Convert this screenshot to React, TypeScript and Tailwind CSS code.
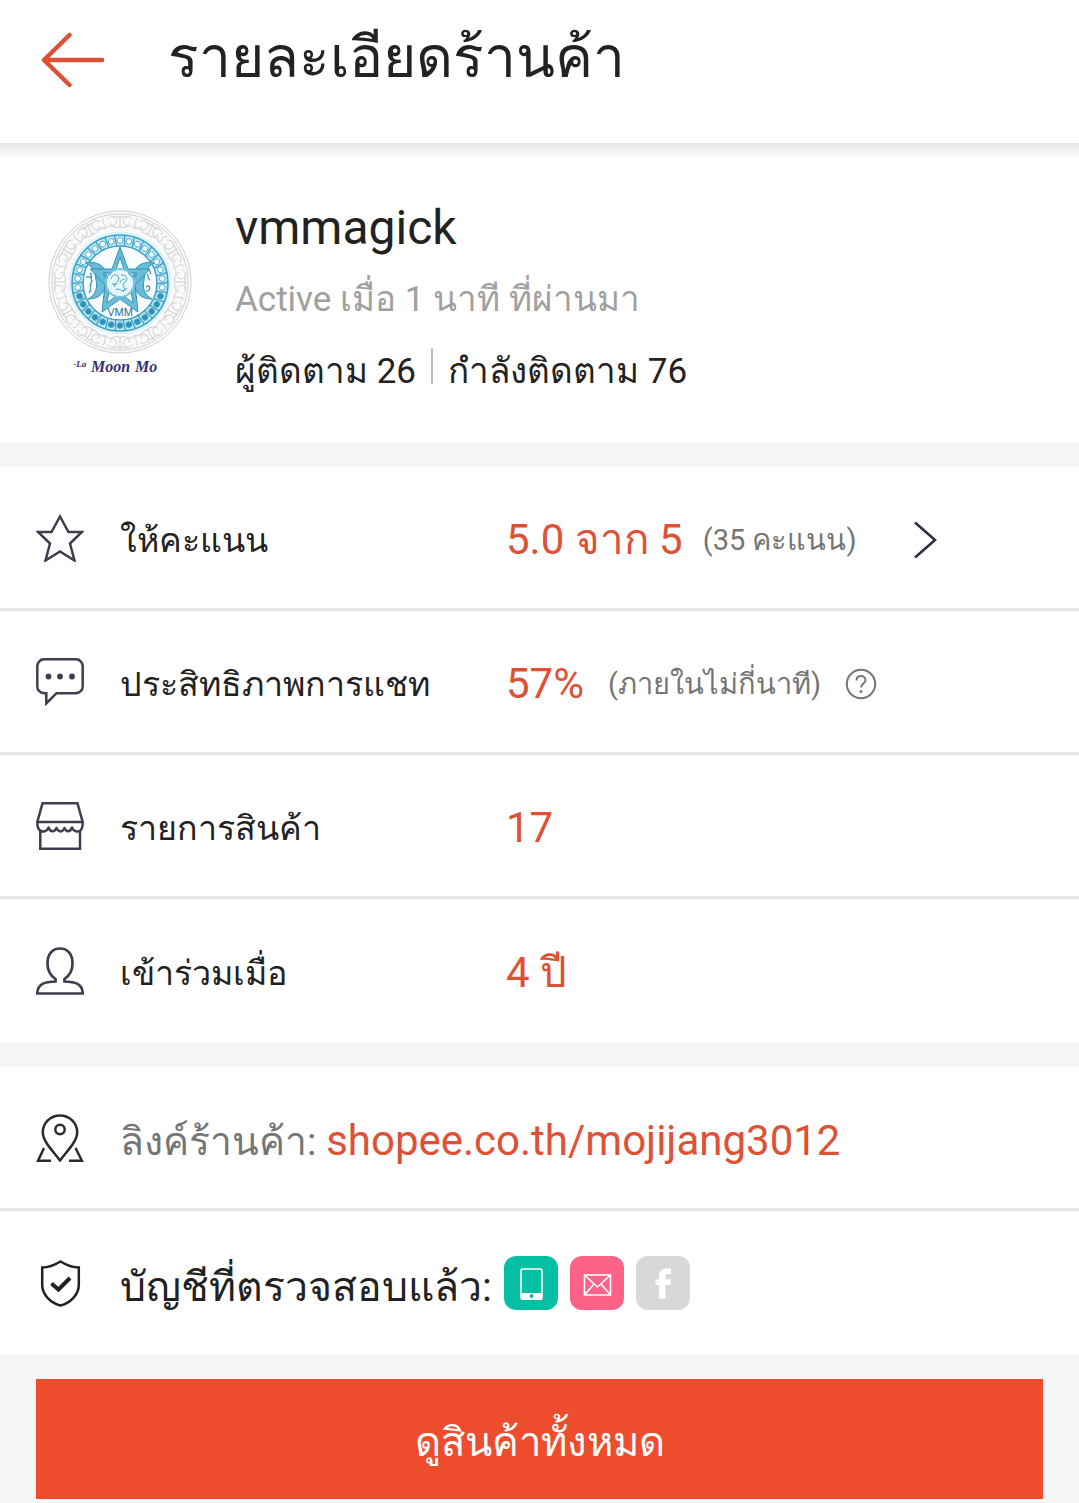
import type { ReactNode } from 'react'

const line = {
  fill: 'none',
  stroke: '#3f3d4f',
  strokeWidth: 2.5,
} as const

function StarIcon() {
  return (
    <svg className="size-12" viewBox="0 0 48 48" aria-hidden="true" {...line}>
      <path d="M24 2.500 32.500 18H46L34 29.500 38.500 46.500 24 37.500 9.500 46.500 14 29.500 2 18H15.500Z" />
    </svg>
  )
}

function ChatIcon() {
  return (
    <svg className="size-12" viewBox="0 0 48 48" aria-hidden="true" {...line}>
      <path d="M8 1.300H40A6.700 6.700 0 0 1 46.700 8V28.500A6.700 6.700 0 0 1 40 35.200H20.500L10.300 45.500V35.200H8A6.700 6.700 0 0 1 1.300 28.500V8A6.700 6.700 0 0 1 8 1.300Z" />
      <g fill="#3f3d4f" stroke="none">
        <circle cx="12.500" cy="18.500" r="2.900" />
        <circle cx="24" cy="18.500" r="2.900" />
        <circle cx="36" cy="18.500" r="2.900" />
      </g>
    </svg>
  )
}

function StoreIcon() {
  return (
    <svg className="size-12" viewBox="0 0 48 48" aria-hidden="true" {...line}>
      <path d="M6.500 1.300H41.500L46.700 20H1.300Z" />
      <path d="M1.300 20C1 26 3.500 29.500 7 29.500 9.500 29.500 11.500 28 12.500 25.500 14.500 30.500 18.500 30.500 20.500 26 22.500 30.500 26.500 30.500 28.500 26 30.500 30.500 34 30.500 36 25.500 37 28 39 29.500 41.500 29.500 45 29.500 47 26 46.700 20" strokeLinejoin="round" />
      <path d="M4.300 28.500V46.700H44V28.500" />
    </svg>
  )
}

function PersonIcon() {
  return (
    <svg className="size-12" viewBox="0 0 48 48" aria-hidden="true" {...line} strokeWidth={2.7}>
      <path d="M19.500 34.500V32C14.500 28.500 11.500 23 11.500 16.500 11.500 7 16.500 1.500 24 1.500S36.500 7 36.500 16.500C36.500 23 33.500 28.500 28.500 32V34.500C39 34.800 46.500 36.500 46.700 46.500H1.300C1.500 36.500 9 34.800 19.500 34.500Z" />
    </svg>
  )
}

function PinIcon() {
  return (
    <svg className="size-12" viewBox="0 0 48 48" aria-hidden="true" {...line} stroke="#2b2b2b">
      <path d="M24 46.500C18 38 6.800 28 6.800 18.200A17.200 16.700 0 0 1 41.200 18.200C41.200 28 30 38 24 46.500Z" />
      <circle cx="24" cy="15.500" r="4.700" />
      <path d="M8 34 2 46.800H15M39.500 34 46 46.800H33" />
    </svg>
  )
}

function ShieldIcon() {
  return (
    <svg className="size-12" viewBox="0 0 48 48" aria-hidden="true" {...line} stroke="#222">
      <path d="M24.500 2.500C18 6.500 12 8.500 6.200 8.500V26C6.200 36 15 44 24.500 46.500 34 44 42.800 36 42.800 26V8.500C37 8.500 31 6.500 24.500 2.500Z" />
      <path d="M15.500 24.500 22.500 30.500 34 19" strokeWidth="4" />
    </svg>
  )
}

const spokes = (count: number) => Array.from({ length: count }, (_, i) => (i * 360) / count)

function Avatar() {
  return (
    <svg className="h-45 w-36 shrink-0" viewBox="0 0 144 180" role="img" aria-label="vmmagick">
      <g fill="none" stroke="#d3cfd3" strokeWidth="1">
        <circle cx="72" cy="79" r="71" fill="#fbfafb" />
        <circle cx="72" cy="79" r="68" />
        {spokes(12).map((a) => (
          <g key={a} transform={`rotate(${a} 72 79)`}>
            <path d="M72 12V25M59 17C64 10 71 15 68 20 66 24 61 22 63 19M85 17C80 10 73 15 76 20 78 24 83 22 81 19M58 25C63 19 68 28 72 23 76 28 81 19 86 25M56 15C52 21 60 22 57 26M65 14H79" />
          </g>
        ))}
      </g>
      <g stroke="#3d9fc2" fill="none">
        <circle cx="72" cy="80" r="51" fill="#d9f4fc" stroke="#d9f4fc" />
        <circle cx="72" cy="80" r="48" fill="#bfe8f5" strokeWidth="1.500" />
        <circle cx="72" cy="80" r="37" fill="#fbfeff" strokeWidth="1.500" />
        {spokes(30).map((a) => (
          <g key={a} transform={`rotate(${a} 72 80)`}>
            <path d="M76.500 32.500V43" strokeWidth="1.300" />
            <circle cx="72" cy="37.500" r="2.900" fill={a > 100 && a < 260 ? '#2d93b8' : '#f6fdff'} strokeWidth="0.800" />
          </g>
        ))}
      </g>
      <g fill="#6bbcd9" stroke="#2d93b8" strokeWidth="1">
        <path d="M38 60C55 57 61 69 58 81 56 92 49 96 40 96 47 92 50 86 48 77 47 69 45 64 38 60Z" />
        <path d="M106 60C89 57 83 69 86 81 88 92 95 96 104 96 97 92 94 86 96 77 97 69 99 64 106 60Z" />
        <path fillRule="evenodd" d="M72 44 80 66 102 66 87 82 90 109 72 96 54 109 57 82 42 66 64 66ZM72 54 67 70 55 70 62 82 59 100 72 90 85 100 82 82 89 70 77 70Z" />
        <circle cx="72" cy="80" r="14" fill="#e6f8fd" stroke="#7cc4de" strokeWidth="2" />
      </g>
      <g fill="none" stroke="#4c9fbd" strokeWidth="1">
        <path d="M63 76C66 68 73 73 70 78 68 82 65 79 67 84M73 72C79 71 81 77 76 80 73 82 79 85 75 89M68 87C71 83 73 92 79 85M64 81H69M72 80C73 76 76 76 77 77M60 72 64 69M80 70 84 74" />
        <path d="M42 70C46 72 41 76 44 78 40 83 45 86 41 90M38 74H43M99 71C102 73 98 75 102 77M98 84C103 80 103 89 98 88M101 67 103 71" strokeWidth="1.500" />
      </g>
      <text x="72" y="113" textAnchor="middle" fill="#276c8a" fontSize="11" fontFamily="Liberation Sans, sans-serif">
        VMM
      </text>
      <g fill="#34306f" fontFamily="Liberation Serif, serif" fontStyle="italic" fontWeight="700">
        <text x="26" y="164" fontSize="9">·La</text>
        <text x="43" y="169" fontSize="16">Moon</text>
        <text x="87" y="169" fontSize="16">Mo</text>
      </g>
    </svg>
  )
}

function Row({ icon, last, children }: { icon: ReactNode; last?: boolean; children: ReactNode }) {
  return (
    <div className={`flex h-36 items-center px-9 ${last ? '' : 'border-b-3 border-[#e6e6e6]'}`}>
      {icon}
      {children}
    </div>
  )
}

function Stat({ icon, label, last, children }: { icon: ReactNode; label: string; last?: boolean; children: ReactNode }) {
  return (
    <Row icon={icon} last={last}>
      <dt className="ml-9 w-[386px] shrink-0 pt-1 text-[34px] whitespace-nowrap">{label}</dt>
      <dd className="flex items-center pt-1 text-[42px] whitespace-nowrap text-[#dd5135]">{children}</dd>
    </Row>
  )
}

export default function App() {
  return (
    <div className="min-h-screen bg-[#f5f5f5] font-[Roboto,sans-serif] leading-[48px] text-[#222]">
      <header className="relative flex h-[143px] items-center bg-white pb-6 pl-10 after:absolute after:inset-x-0 after:top-full after:h-4 after:bg-linear-to-b after:from-[#e8e8e8] after:to-white">
        <button type="button" aria-label="ย้อนกลับ">
          <svg className="h-14 w-16" viewBox="0 0 64 56" fill="none" stroke="#dd5135" strokeWidth="4.500" strokeLinecap="round" strokeLinejoin="round" aria-hidden="true">
            <path d="M29.500 3 4 28 29.500 53M4 28H62.500" />
          </svg>
        </button>
        <h1 className="ml-16 pb-1 text-[57px] leading-[72px]">รายละเอียดร้านค้า</h1>
      </header>

      <main>
        <section className="flex h-75 items-start bg-white pt-15 pl-12">
          <Avatar />
          <div className="ml-[43px] pt-px text-[35px]">
            <h2 className="text-[48px]">vmmagick</h2>
            <p className="mt-6 text-[#a0a0a0]">Active เมื่อ 1 นาที ที่ผ่านมา</p>
            <p className="mt-6 flex">
              <span>ผู้ติดตาม 26</span>
              <span className="mx-[15px] h-9 w-0.5 bg-[#bdbdbd]" />
              <span>กำลังติดตาม 76</span>
            </p>
          </div>
        </section>

        <dl className="mt-6 bg-white">
          <Stat icon={<StarIcon />} label="ให้คะแนน">
            5.0 จาก 5
            <span className="ml-5 text-[29px] text-[#757575]">(35 คะแนน)</span>
            <button type="button" aria-label="ดูคะแนน" className="ml-14">
              <svg className="h-10 w-6" viewBox="0 0 24 40" fill="none" stroke="#2f2d45" strokeWidth="2.600" aria-hidden="true">
                <path d="M2 2.500 22 20 2 37.500" />
              </svg>
            </button>
          </Stat>
          <Stat icon={<ChatIcon />} label="ประสิทธิภาพการแชท">
            57%
            <span className="ml-6 text-[29px] text-[#757575]">(ภายในไม่กี่นาที)</span>
            <button type="button" aria-label="ข้อมูลเพิ่มเติม" className="ml-6">
              <svg className="size-8" viewBox="0 0 32 32" fill="none" stroke="#757575" strokeWidth="2" aria-hidden="true">
                <circle cx="16" cy="16" r="14.200" />
                <path d="M11.500 12.500C11.500 9.500 13.500 8 16 8S20.500 9.700 20.500 12.300C20.500 15.500 16 15.500 16 19.500" />
                <circle cx="16" cy="23.500" r="1.500" fill="#757575" stroke="none" />
              </svg>
            </button>
          </Stat>
          <Stat icon={<StoreIcon />} label="รายการสินค้า">17</Stat>
          <Stat icon={<PersonIcon />} label="เข้าร่วมเมื่อ" last>
            4 ปี
          </Stat>
        </dl>

        <section className="mt-6 bg-white">
          <Row icon={<PinIcon />}>
            <p className="ml-9 pt-2 text-[39px] whitespace-nowrap text-[#757575]">
              ลิงค์ร้านค้า:{' '}
              <a href="https://shopee.co.th/mojijang3012" className="text-[42px] text-[#dd5135]">
                shopee.co.th/mojijang3012
              </a>
            </p>
          </Row>
          <Row icon={<ShieldIcon />} last>
            <p className="ml-9 pt-2 text-[41px] whitespace-nowrap">บัญชีที่ตรวจสอบแล้ว:</p>
            <div className="ml-3 flex gap-3">
              <svg className="size-13.5 rounded-xl bg-[#04bfa3]" viewBox="0 0 54 54" role="img" aria-label="โทรศัพท์">
                <rect x="17" y="13" width="21" height="30" rx="2" fill="none" stroke="#fff" strokeWidth="1.600" />
                <path d="M16.500 37H38.500V42A2 2 0 0 1 36.500 44H18.500A2 2 0 0 1 16.500 42Z" fill="#fff" />
                <circle cx="27.500" cy="40" r="1.900" fill="#04bfa3" />
              </svg>
              <svg className="size-13.5 rounded-xl bg-[#fd6288]" viewBox="0 0 54 54" fill="none" stroke="#fff" strokeWidth="1.600" role="img" aria-label="อีเมล">
                <path d="M14.500 19H40.500V39H14.500ZM14.500 19 27.500 31 40.500 19M14.500 39 24 28M40.500 39 31 28" />
              </svg>
              <svg className="size-13.5 rounded-xl bg-[#d8d8d8]" viewBox="0 0 54 54" role="img" aria-label="Facebook">
                <path d="M23 42.500V29H19.500V23.500H23V20.500C23 15 26 12.500 30.500 12.500H35V18H32C30 18 29.500 19 29.500 20.500V23.500H35L34.500 29H29.500V42.500Z" fill="#fff" />
              </svg>
            </div>
          </Row>
        </section>

        <div className="px-9 pt-6 pb-1">
          <button type="button" className="h-30 w-full bg-[#ee4d2d] pt-2 text-[40px] text-white">
            ดูสินค้าทั้งหมด
          </button>
        </div>
      </main>
    </div>
  )
}
